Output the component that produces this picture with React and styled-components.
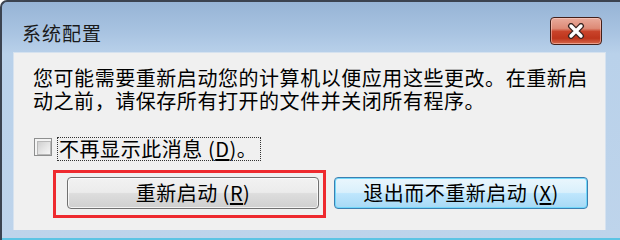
import React from "react";
import styled, { createGlobalStyle } from "styled-components";

const Global = createGlobalStyle`
  html, body { margin: 0; padding: 0; background: #ffffff; }
  body { width: 620px; height: 240px; overflow: hidden; }
  * { box-sizing: border-box; }
`;

const FONT = `"Noto Sans CJK SC", "Noto Sans", sans-serif`;

const Window = styled.div`
  width: 620px;
  height: 240px;
  display: flex;
  flex-direction: column;
  border-top: 2px solid #3b4350;
  border-left: 2px solid #3b4350;
  border-top-left-radius: 7px;
  background: linear-gradient(180deg, #97b4d6 0px, #a8c3e1 30px, #b9d1ea 52px, #bed4eb 100%);
  font-family: ${FONT};
  color: #000;
`;

const TitleBar = styled.div`
  height: 50px;
  display: flex;
  justify-content: space-between;
  align-items: flex-start;
  padding: 0 18px 0 20px;
`;

const Title = styled.div`
  margin-top: 19px;
  font-size: 19px;
  line-height: 24px;
  letter-spacing: 1px;
  color: #1a1a1a;
`;

const CloseButton = styled.div`
  margin-top: 15px;
  width: 52px;
  height: 28px;
  border: 1px solid #43201a;
  border-radius: 4px;
  background: linear-gradient(180deg, #e9ab9c 0%, #dd8a76 40%, #c9432a 52%, #be351c 78%, #d6684b 100%);
  box-shadow: inset 0 0 0 1px rgba(255, 215, 205, 0.5);
  display: flex;
  align-items: center;
  justify-content: center;
`;

const Content = styled.div`
  margin: 0 14px 0 11px;
  height: 178px;
  background: #f0f0f0;
  border: 1px solid #d6e2ef;
  border-bottom: none;
  padding: 13px 0 0 19px;
  display: flex;
  flex-direction: column;
`;

const Message = styled.p`
  margin: 0;
  font-size: 20px;
  line-height: 23px;
  letter-spacing: 0.55px;
  white-space: nowrap;
  color: #000;
`;

const CheckRow = styled.div`
  margin-top: 25px;
  display: flex;
  align-items: flex-start;
  gap: 5px;
  padding-left: 1px;
`;

const CheckBox = styled.span`
  margin-top: 1px;
  width: 18px;
  height: 18px;
  border: 1px solid #8e8f8f;
  background: #f4f4f4;
  padding: 2px;
  display: block;
  &::after {
    content: "";
    display: block;
    width: 100%;
    height: 100%;
    border: 1px solid #b8b8b8;
    background: linear-gradient(135deg, #cfcfcf 0%, #e6e6e6 55%, #f6f6f6 100%);
  }
`;

const CheckLabel = styled.span`
  height: 24px;
  border: 1px dotted #333;
  padding: 0 3px 0 1px;
  font-size: 20px;
  line-height: 22px;
  letter-spacing: 0.55px;
  white-space: nowrap;
`;

const Key = styled.span`
  text-decoration: underline;
  text-underline-offset: 2px;
`;

const ButtonRow = styled.div`
  margin-top: 9px;
  display: flex;
  align-items: flex-start;
`;

const Highlight = styled.div`
  margin-left: 20px;
  border: 3px solid #ee2a2f;
  padding: 4px 4px 6px 11px;
`;

const Button = styled.div`
  width: ${(p) => p.$w}px;
  height: 32px;
  margin-top: ${(p) => p.$mt || 0}px;
  margin-left: ${(p) => p.$ml || 0}px;
  border-radius: 4px;
  border: 1px solid ${(p) => (p.$primary ? "#3c7fb1" : "#707070")};
  background: ${(p) =>
    p.$primary
      ? "linear-gradient(180deg, #eaf6fd 0%, #d9f0fc 48%, #bee6fd 52%, #a7d9f5 100%)"
      : "linear-gradient(180deg, #f2f2f2 0%, #ebebeb 48%, #dddddd 52%, #cfcfcf 100%)"};
  box-shadow: inset 0 0 0 1px ${(p) => (p.$primary ? "rgba(110, 215, 250, 0.95)" : "rgba(255,255,255,0.75)")};
  display: flex;
  align-items: center;
  justify-content: center;
  font-size: 20px;
  line-height: 24px;
  letter-spacing: 0.5px;
  color: #000;
  white-space: nowrap;
`;

const BottomEdge = styled.div`
  flex: 1;
  border-bottom: 2px solid #5cc4e4;
`;

export default function App() {
  return (
    <>
      <Global />
      <Window>
        <TitleBar>
          <Title>系统配置</Title>
          <CloseButton>
            <svg width="20" height="16" viewBox="0 0 20 16">
              <path d="M5 3 L15 13 M15 3 L5 13" stroke="#3a2420" strokeWidth="6" strokeLinecap="round" />
              <path d="M5 3 L15 13 M15 3 L5 13" stroke="#ffffff" strokeWidth="3.4" strokeLinecap="round" />
            </svg>
          </CloseButton>
        </TitleBar>
        <Content>
          <Message>
            {"您可能需要重新启动您的计算机以便应用这些更改。在重新启"}
            <br />
            {"动之前，请保存所有打开的文件并关闭所有程序。"}
          </Message>
          <CheckRow>
            <CheckBox />
            <CheckLabel>
              不再显示此消息 (<Key>D</Key>)。
            </CheckLabel>
          </CheckRow>
          <ButtonRow>
            <Highlight>
              <Button $w={252}>
                重新启动 (<Key>R</Key>)
              </Button>
            </Highlight>
            <Button $w={254} $mt={7} $ml={8} $primary>
              退出而不重新启动 (<Key>X</Key>)
            </Button>
          </ButtonRow>
        </Content>
        <BottomEdge />
      </Window>
    </>
  );
}
